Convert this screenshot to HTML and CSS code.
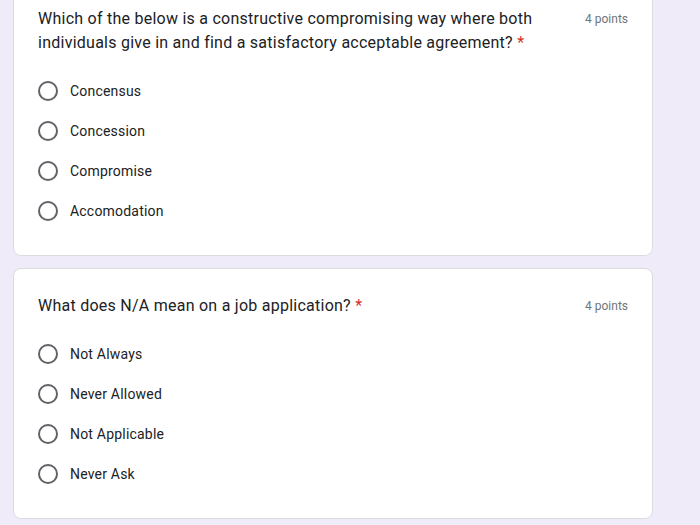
FILE: index.html
```html
<!DOCTYPE html>
<html>
<head>
<meta charset="utf-8">
<link rel="stylesheet" href="styles.css">
</head>
<body>
<div class="page">
  <div class="card first">
    <div class="qhead">
      <div class="qtext">Which of the below is a constructive compromising way where both individuals give in and find a satisfactory acceptable agreement? <span class="req">*</span></div>
      <div class="points">4 points</div>
    </div>
    <div class="options">
      <div class="opt"><span class="radio"></span><span class="label">Concensus</span></div>
      <div class="opt"><span class="radio"></span><span class="label">Concession</span></div>
      <div class="opt"><span class="radio"></span><span class="label">Compromise</span></div>
      <div class="opt"><span class="radio"></span><span class="label">Accomodation</span></div>
    </div>
  </div>
  <div class="card">
    <div class="qhead">
      <div class="qtext">What does N/A mean on a job application? <span class="req">*</span></div>
      <div class="points">4 points</div>
    </div>
    <div class="options">
      <div class="opt"><span class="radio"></span><span class="label">Not Always</span></div>
      <div class="opt"><span class="radio"></span><span class="label">Never Allowed</span></div>
      <div class="opt"><span class="radio"></span><span class="label">Not Applicable</span></div>
      <div class="opt"><span class="radio"></span><span class="label">Never Ask</span></div>
    </div>
  </div>
</div>
</body>
</html>
```
FILE: styles.css
```css
html, body {
  margin: 0;
  padding: 0;
  background: #f0ebf8;
  overflow: hidden;
}
.page {
  width: 640px;
  margin-left: 13px;
  margin-top: -19px;
  display: flex;
  flex-direction: column;
  gap: 12px;
}
.card {
  background: #fff;
  border: 1px solid #dadce0;
  border-radius: 8px;
  padding: 24px;
}
.qhead {
  display: flex;
  justify-content: space-between;
  align-items: flex-start;
  gap: 40px;
}
.qtext {
  font-family: Roboto, "Liberation Sans", sans-serif;
  font-size: 16px;
  line-height: 24px;
  color: #202124;
  letter-spacing: 0.25px;
  max-width: 505px;
  padding-top: 1px;
}
.req {
  color: #d93025;
}
.points {
  font-family: Roboto, "Liberation Sans", sans-serif;
  font-size: 12px;
  line-height: 24px;
  color: #70757a;
  white-space: nowrap;
  padding-top: 1px;
}
.options {
  margin-top: 16px;
  display: flex;
  flex-direction: column;
}
.opt {
  height: 40px;
  display: flex;
  align-items: center;
}
.radio {
  box-sizing: border-box;
  width: 20px;
  height: 20px;
  border: 2px solid #5f6368;
  border-radius: 50%;
  margin-right: 12px;
  flex: none;
}
.label {
  font-family: Roboto, "Liberation Sans", sans-serif;
  font-size: 14px;
  color: #202124;
  letter-spacing: 0.2px;
}
```
